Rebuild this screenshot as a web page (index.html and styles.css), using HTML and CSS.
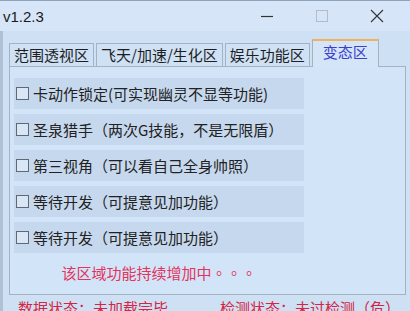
FILE: index.html
```html
<!DOCTYPE html>
<html>
   <head>
      <meta charset="utf-8">
      <title>v1.2.3</title>
      <link rel="stylesheet" href="styles.css">
   </head>
   <body>
      <div class="window">
         <div class="titlebar">
            <span class="title">v1.2.3</span>
            <div class="controls">
               <span class="ctl"><svg width="14" height="14" viewBox="0 0 14 14"><path d="M1 7.5h12" stroke="#333" stroke-width="1.2"/></svg></span>
               <span class="ctl"><svg width="14" height="14" viewBox="0 0 14 14"><rect x="1.5" y="1.5" width="11" height="11" fill="none" stroke="#b3bcc6" stroke-width="1"/></svg></span>
               <span class="ctl"><svg width="14" height="14" viewBox="0 0 14 14"><path d="M1 1L13 13M13 1L1 13" stroke="#333" stroke-width="1.1"/></svg></span>
            </div>
         </div>

         <div class="main">
            <div class="tabs">
               <div class="tab">范围透视区</div>
               <div class="tab">飞天/加速/生化区</div>
               <div class="tab">娱乐功能区</div>
               <div class="tab active">变态区</div>
            </div>
            <div class="pane">
               <div class="list">
                  <label class="row"><span class="box"></span>卡动作锁定(可实现幽灵不显等功能)</label>
                  <label class="row"><span class="box"></span>圣泉猎手（两次G技能，不是无限盾）</label>
                  <label class="row"><span class="box"></span>第三视角（可以看自己全身帅照）</label>
                  <label class="row"><span class="box"></span>等待开发（可提意见加功能）</label>
                  <label class="row"><span class="box"></span>等待开发（可提意见加功能）</label>
                  <div class="notice">该区域功能持续增加中<span class="dots">。。。</span></div>
               </div>
            </div>
            <div class="status">
               <span>数据状态：未加载完毕</span>
               <span>检测状态：未过检测（危）</span>
            </div>
         </div>
      </div>
   </body>
</html>
```

FILE: styles.css
```css
body {
    margin: 0;
    padding: 0;
    background: #cfe1f5;
    font-family: "Noto Sans CJK SC", "Noto Sans", sans-serif;
    overflow: hidden;
}
.window {
    width: 410px;
    height: 311px;
    display: flex;
    flex-direction: column;
    overflow: hidden;
}
.titlebar {
    height: 30px;
    border-top: 1px solid #8fa3bb;
    background: #d6e6f8;
    display: flex;
    align-items: center;
}
.title {
    padding-left: 3px;
    font-family: "Liberation Sans", "Noto Sans", sans-serif;
    font-size: 15px;
    color: #1b1b1b;
}
.controls {
    margin-left: auto;
    display: flex;
    padding-right: 6px;
}
.ctl {
    width: 55px;
    height: 30px;
    display: flex;
    align-items: center;
    justify-content: center;
}
.main {
    flex: 1;
    border-left: 3px solid #b0c1d4;
    background: #cde0f4;
    padding: 8px 0 0 6px;
}
.tabs {
    display: flex;
    align-items: flex-end;
    gap: 2px;
    height: 27px;
    position: relative;
    z-index: 1;
}
.tab {
    height: 23px;
    line-height: 22px;
    padding: 0 4px;
    border: 1px solid #a6b2bf;
    border-bottom: none;
    box-sizing: border-box;
    background: #cfe1f4;
    color: #1e1e1e;
    font-size: 15px;
    white-space: nowrap;
}
.tab.active {
    height: 28px;
    margin-bottom: -1px;
    padding: 0 10px;
    border-top: 2px solid #eeb35c;
    background: #d4e5f8;
    color: #3d3fcb;
}
.pane {
    width: 397px;
    height: 229px;
    box-sizing: border-box;
    border: 1px solid #a6b2bf;
    background: #d2e4f7;
    padding: 11px 0 0 4px;
}
.list {
    width: 290px;
    display: flex;
    flex-direction: column;
    gap: 5px;
}
.row {
    height: 31px;
    display: flex;
    align-items: center;
    gap: 4px;
    padding-left: 2px;
    background: #c6d8ed;
    color: #222;
    font-size: 15px;
    white-space: nowrap;
}
.box {
    width: 13px;
    height: 13px;
    box-sizing: border-box;
    border: 1px solid #5f6873;
    background: #d8e6f5;
    flex: none;
}
.notice {
    margin-top: 5px;
    line-height: 20px;
    text-align: center;
    color: #e4335c;
    font-size: 15px;
}
.notice .dots {
    font-family: "Noto Sans CJK TC", sans-serif;
}
.status {
    display: flex;
    gap: 52px;
    padding: 3px 0 0 9px;
    line-height: 20px;
    color: #d62443;
    font-size: 15px;
    white-space: nowrap;
}
```
